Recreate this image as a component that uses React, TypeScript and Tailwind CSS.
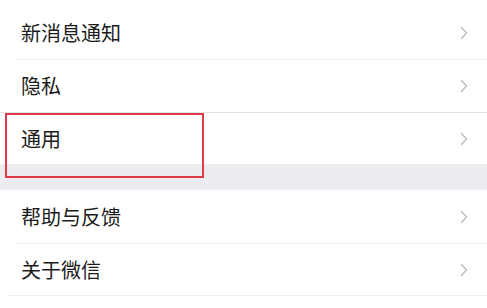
import React from 'react';

interface Row {
  label: string;
  height: string;
  divider?: string;
  extra?: string;
}

const topGroup: Row[] = [
  { label: '新消息通知', height: 'h-[59px]', divider: 'ml-[15px] bg-[#efefef]', extra: 'pt-[6px]' },
  { label: '隐私', height: 'h-[52px]', divider: 'bg-[#e2e2e2]' },
  { label: '通用', height: 'h-[51px]' },
];

const bottomGroup: Row[] = [
  { label: '帮助与反馈', height: 'h-[53px]', divider: 'ml-[15px] bg-[#efefef]' },
  { label: '关于微信', height: 'h-[51px]', divider: 'ml-[8px] bg-[#efefef]' },
];

function Chevron() {
  return (
    <svg width="8" height="14" viewBox="0 0 8 14" fill="none" className="shrink-0">
      <polyline points="1.5,1.5 6.5,7 1.5,12.5" stroke="#bcbcbc" strokeWidth="1.4" strokeLinecap="round" strokeLinejoin="round" />
    </svg>
  );
}

function SettingRow({ row }: { row: Row }) {
  return (
    <div className="bg-white">
      <div className={`flex items-center justify-between pl-[21px] pr-[19px] ${row.height} ${row.extra ?? ''}`}>
        <span className="text-[20px] leading-none text-[#1b1b1b]">{row.label}</span>
        <Chevron />
      </div>
      {row.divider && <div className={`h-px ${row.divider}`} />}
    </div>
  );
}

export default function App() {
  return (
    <div
      className="relative w-[487px] h-[308px] overflow-hidden bg-white"
      style={{ fontFamily: '"Noto Sans CJK SC", "Noto Sans", sans-serif' }}
    >
      {topGroup.map((row) => (
        <SettingRow key={row.label} row={row} />
      ))}

      {/* section gap */}
      <div className="h-[26px] bg-[#ededf1]" />

      {bottomGroup.map((row) => (
        <SettingRow key={row.label} row={row} />
      ))}

      {/* highlight box */}
      <div className="absolute left-[5px] top-[113px] w-[199px] h-[65px] border-2 border-[#de3c48] pointer-events-none" />
    </div>
  );
}
